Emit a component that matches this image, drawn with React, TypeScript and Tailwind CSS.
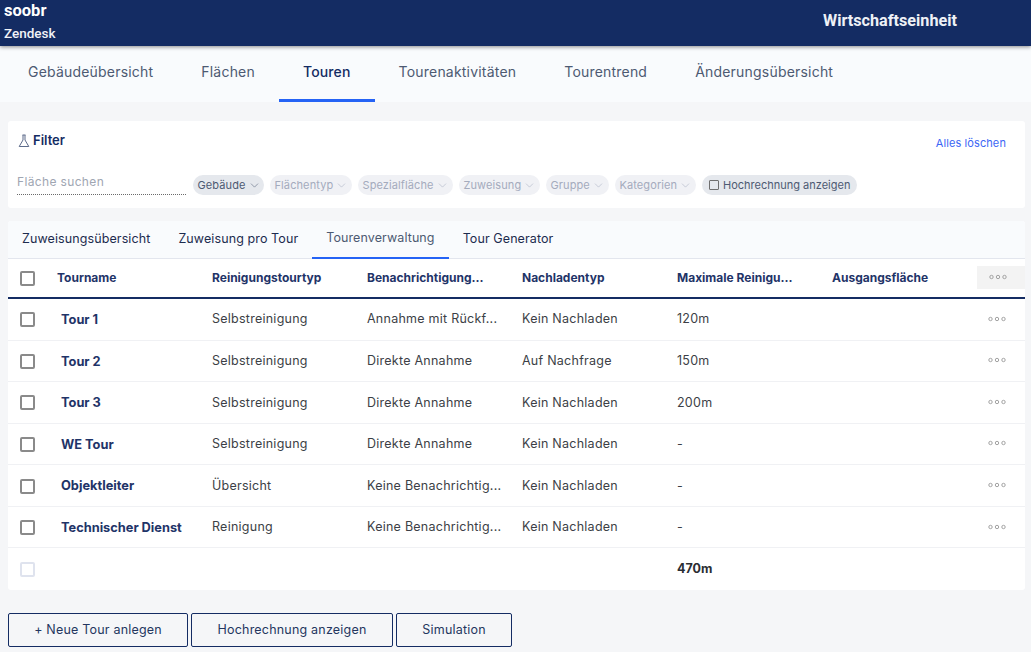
import { ChevronDown } from 'lucide-react';

const navItems = ['Gebäudeübersicht', 'Flächen', 'Touren', 'Tourenaktivitäten', 'Tourentrend', 'Änderungsübersicht'];

const subTabs = [
  { label: 'Zuweisungsübersicht', active: false },
  { label: 'Zuweisung pro Tour', active: false },
  { label: 'Tourenverwaltung', active: true },
  { label: 'Tour Generator', active: false },
];

const filters = [
  { label: 'Gebäude', active: true, width: 'w-[71px]' },
  { label: 'Flächentyp', active: false, width: 'w-[82px]' },
  { label: 'Spezialfläche', active: false, width: 'w-[95px]' },
  { label: 'Zuweisung', active: false, width: 'w-[81px]' },
  { label: 'Gruppe', active: false, width: 'w-[63px]' },
  { label: 'Kategorien', active: false, width: 'w-[81px]' },
];

const columns = ['Tourname', 'Reinigungstourtyp', 'Benachrichtigung...', 'Nachladentyp', 'Maximale Reinigu...', 'Ausgangsfläche'];

const tours = [
  ['Tour 1', 'Selbstreinigung', 'Annahme mit Rückf...', 'Kein Nachladen', '120m'],
  ['Tour 2', 'Selbstreinigung', 'Direkte Annahme', 'Auf Nachfrage', '150m'],
  ['Tour 3', 'Selbstreinigung', 'Direkte Annahme', 'Kein Nachladen', '200m'],
  ['WE Tour', 'Selbstreinigung', 'Direkte Annahme', 'Kein Nachladen', '-'],
  ['Objektleiter', 'Übersicht', 'Keine Benachrichtig...', 'Kein Nachladen', '-'],
  ['Technischer Dienst', 'Reinigung', 'Keine Benachrichtig...', 'Kein Nachladen', '-'],
];

const rowGrid = 'grid grid-cols-[49px_155px_155px_155px_155px_155px_145px_48px] items-center';

const Dots = () => (
  <svg width="18" height="6" viewBox="0 0 18 6" fill="none" stroke="#a3a3a3" strokeWidth="1">
    <circle cx="2.5" cy="3" r="1.7" />
    <circle cx="9" cy="3" r="1.7" />
    <circle cx="15.5" cy="3" r="1.7" />
  </svg>
);

const Check = ({ light = false }: { light?: boolean }) => (
  <div className={`ml-3 w-[15px] h-[15px] rounded-[2px] border-2 bg-white ${light ? 'border-[#dfe3ee]' : 'border-[#8a8a8a]'}`} />
);

const App = () => {
  return (
    <div className="w-[1031px] h-[652px] overflow-hidden bg-[#f5f6f8] font-['Inter',sans-serif]">
      <header className="h-[46px] bg-[#142c63] flex justify-between text-white shadow-[0_1px_4px_rgba(0,0,0,0.45)] relative font-['Roboto',sans-serif]">
        <div className="pl-1">
          <div className="text-[16.5px] font-bold leading-[21px]">soobr</div>
          <div className="text-[13.5px] font-medium leading-[16px] mt-[4px] text-[#f1f3f8]">Zendesk</div>
        </div>
        <div className="w-[208px] text-[16.2px] font-bold leading-[41px] text-[#eef1f6]">Wirtschaftseinheit</div>
      </header>

      <nav className="h-[56px] bg-[#f9fbfd] flex pl-1">
        {navItems.map((item) => (
          <div
            key={item}
            className={`h-full px-6 flex items-center pb-[2px] text-[14px] border-b-[3px] ${
              item === 'Touren' ? 'border-[#2563f5] text-[#142c63] font-medium tracking-[0.15px]' : 'border-transparent text-[#4d5a72] tracking-[0.2px]'
            }`}
          >
            {item}
          </div>
        ))}
      </nav>

      <main className="pl-2 pr-[6px] pt-[19px]">
        <section className="h-[87px] bg-white rounded-[3px] relative px-[9px]">
          <div className="flex items-center h-[40px] gap-[3px] pl-[1px]">
            <svg width="12" height="14" viewBox="0 0 12 14" fill="none" stroke="#5d6b8a" strokeWidth="1">
              <path d="M4.5 1h3M5 1v5L1.2 12.5h9.6L7 6V1" />
            </svg>
            <span className="text-[13px] font-semibold text-[#142c63]">Filter</span>
          </div>
          <a className="absolute right-[19px] top-[14px] text-[11px] tracking-[0.1px] text-[#3b66f5]">Alles löschen</a>
          <div className="flex items-end mt-[7px]">
            <div className="w-[169px] h-[27px] border-b border-dotted border-[#6b6b6b] text-[12px] tracking-[0.35px] text-[#a0a6b2] leading-[28px]">
              Fläche suchen
            </div>
            <div className="flex gap-[6px] ml-[7px]">
              {filters.map((f) => (
                <div
                  key={f.label}
                  className={`${f.width} h-[20px] rounded-full flex items-center pl-[4.5px] gap-[2px] text-[11px] tracking-[0.1px] ${
                    f.active ? 'bg-[#e5e8ed] text-[#4d5a72]' : 'bg-[#f0f1f5] text-[#a4abbd]'
                  }`}
                >
                  <span>{f.label}</span>
                  <ChevronDown size={13} strokeWidth={1} />
                </div>
              ))}
              <div className="w-[155px] h-[20px] rounded-full bg-[#e5e8ed] flex items-center pl-[7px] gap-[4px] text-[11px] text-[#4d5a72]">
                <div className="w-[10px] h-[10px] border border-[#6f6f6f] rounded-[1px]" />
                <span className="whitespace-nowrap">Hochrechnung anzeigen</span>
              </div>
            </div>
          </div>
        </section>

        <section className="mt-[13px] bg-white rounded-[3px] overflow-hidden">
          <div className="h-[38px] bg-[#f9fbfd] border-b border-[#e3e6ee] flex">
            {subTabs.map((t) => (
              <div
                key={t.label}
                className={`h-[38px] px-[14px] flex items-center text-[12.5px] tracking-[0.1px] ${
                  t.active ? 'border-b-[2px] border-[#2563f5] text-[#4d5a72] pb-[2px]' : 'text-[#1d2c4f] pb-[1px]'
                }`}
              >
                {t.label}
              </div>
            ))}
          </div>

          <div className={`${rowGrid} h-[40px] border-b-2 border-[#142c63]`}>
            <Check />
            {columns.map((c) => (
              <div key={c} className="text-[12px] font-bold text-[#1f3468]">
                {c}
              </div>
            ))}
            <div className="h-[23px] bg-[#f3f3f3] flex items-center pl-[12px] mb-[2px]">
              <Dots />
            </div>
          </div>

          {tours.map((row) => (
            <div key={row[0]} className={`${rowGrid} h-[41.57px] pt-[1px] border-b border-[#f0f1f4]`}>
              <Check />
              <div className="pl-1 text-[12.8px] font-bold text-[#1f3468] whitespace-nowrap">{row[0]}</div>
              {row.slice(1).map((cell, i) => (
                <div key={i} className="text-[12.5px] tracking-[0.25px] text-[#3c3f46] whitespace-nowrap">
                  {cell}
                </div>
              ))}
              <div />
              <div className="flex pl-[11px] pb-[2px]">
                <Dots />
              </div>
            </div>
          ))}

          <div className={`${rowGrid} h-[41.57px] pt-[1px]`}>
            <Check light />
            <div />
            <div />
            <div />
            <div />
            <div className="text-[12.5px] font-bold text-[#2a2d33]">470m</div>
          </div>
        </section>

        <div className="flex gap-[3px] mt-[23px]">
          {[
            { label: '+ Neue Tour anlegen', width: 'w-[180px]' },
            { label: 'Hochrechnung anzeigen', width: 'w-[202px]' },
            { label: 'Simulation', width: 'w-[116px]' },
          ].map((b) => (
            <button
              key={b.label}
              className={`${b.width} h-[34px] border border-[#142c63] rounded-[2px] text-[12.5px] tracking-[0.2px] text-[#24365f]`}
            >
              {b.label}
            </button>
          ))}
        </div>
      </main>
    </div>
  );
};

export default App;
